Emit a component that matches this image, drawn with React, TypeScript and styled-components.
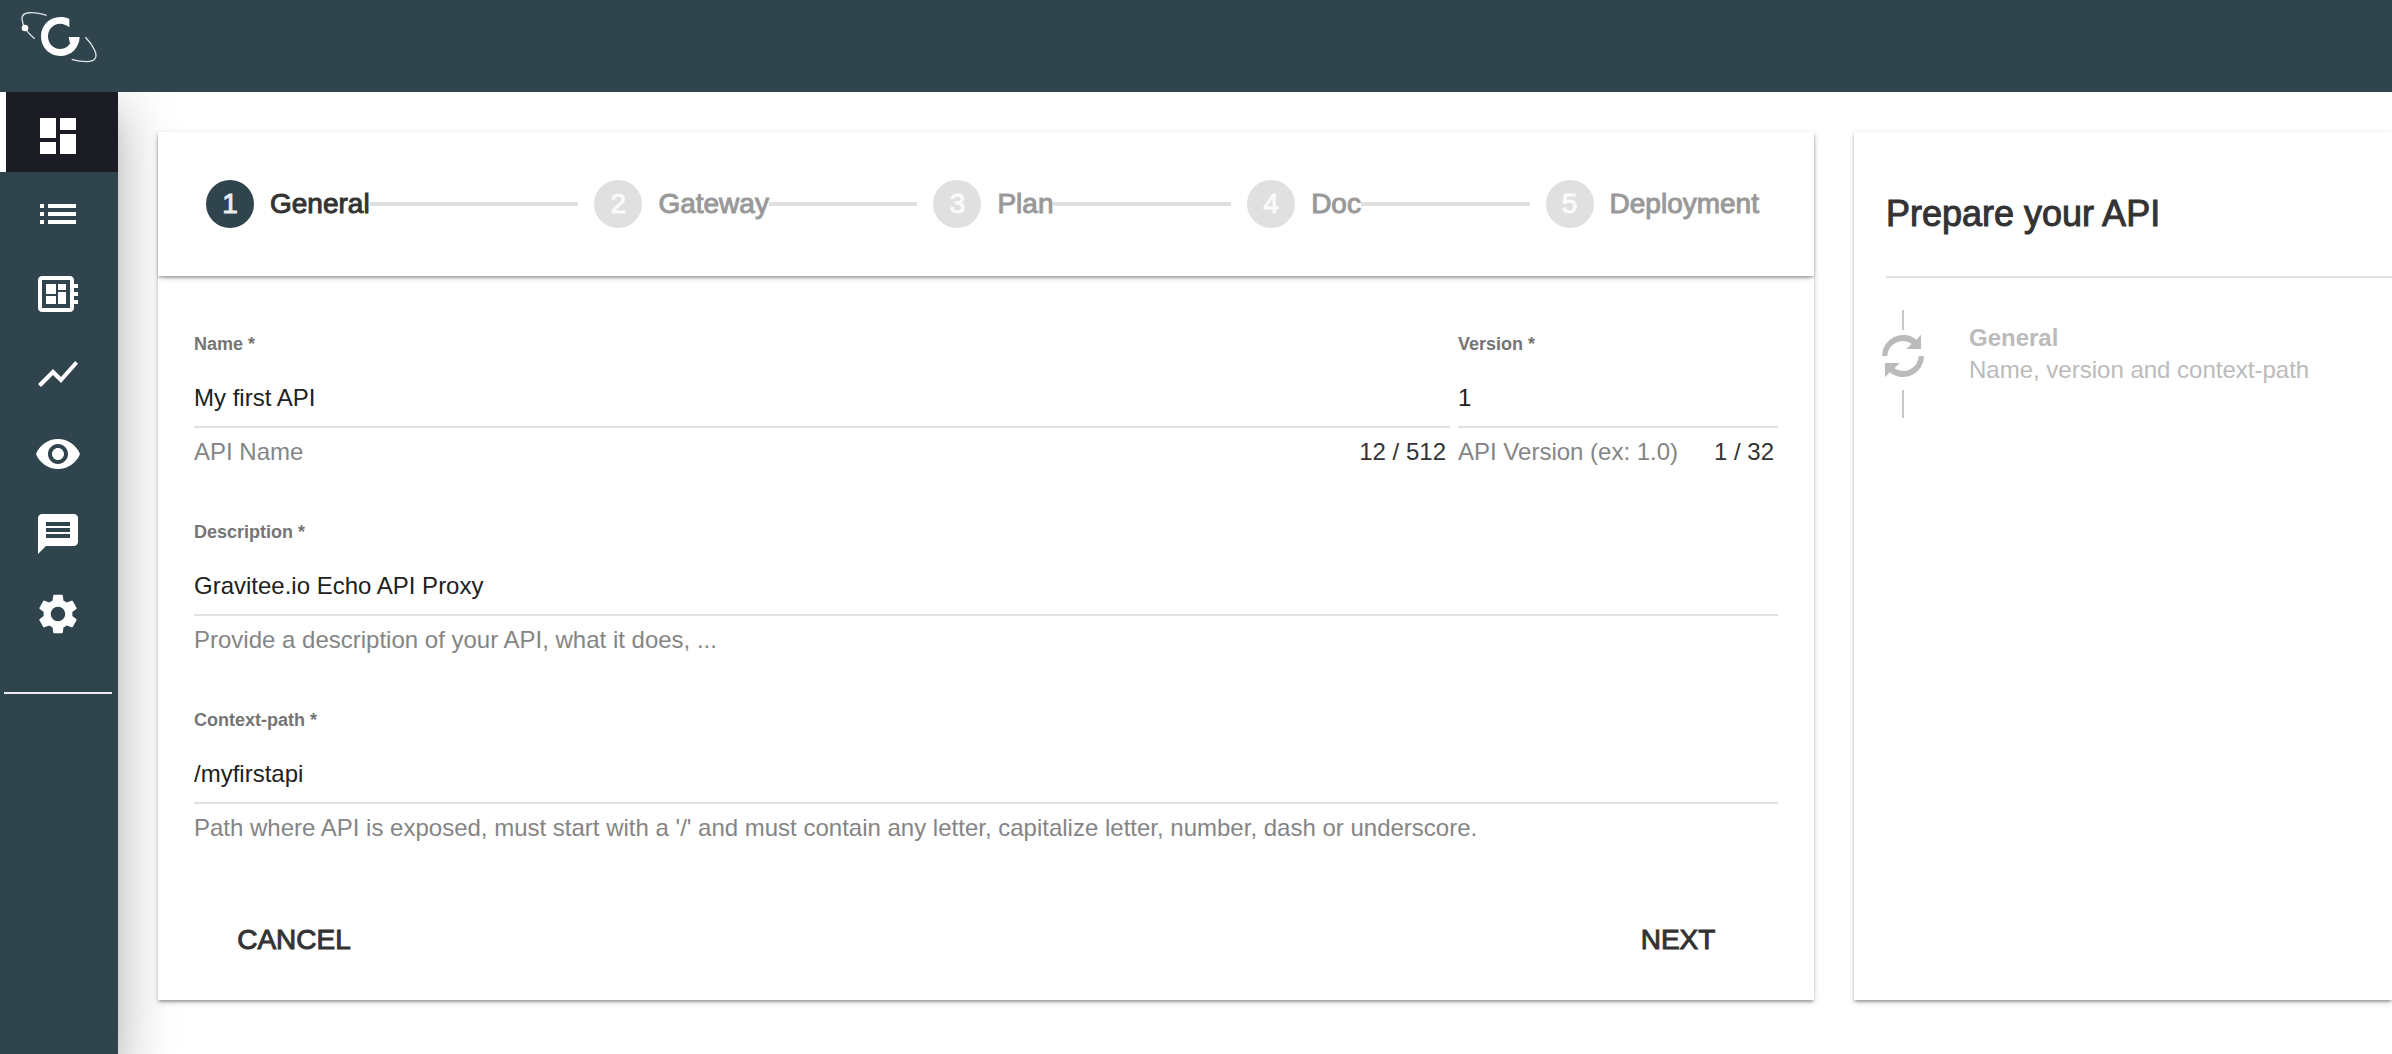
import React, { useState } from "react";
import styled, { createGlobalStyle, css } from "styled-components";
import {
  MdDashboard,
  MdList,
  MdDeveloperBoard,
  MdShowChart,
  MdVisibility,
  MdMessage,
  MdSettings,
} from "react-icons/md";

const slate = "#30444e";
const ink = "#333333";
const rule = "#e0e0e0";

const GlobalStyle = createGlobalStyle`
  *, *::before, *::after { box-sizing: border-box; }
  body {
    margin: 0;
    background: #ffffff;
    color: ${ink};
    font-family: "Liberation Sans", Arial, sans-serif;
  }
`;

const mediumWeight = css`
  font-weight: 400;
  -webkit-text-stroke: 1px currentColor;
`;

const Page = styled.div`
  min-height: 100vh;
  display: flex;
  flex-direction: column;
`;

const TopBar = styled.header`
  height: 92px;
  flex: none;
  padding: 6px 16px;
  background: ${slate};
`;

const LogoLink = styled.a`
  display: inline-block;
  svg { display: block; }
`;

const Body = styled.div`
  flex: 1;
  display: flex;
  overflow: hidden;
`;

const SideBar = styled.nav`
  flex: 0 0 118px;
  background: ${slate};
  box-shadow: 0 16px 20px -10px rgba(0, 0, 0, 0.2), 0 32px 48px 4px rgba(0, 0, 0, 0.14),
    0 12px 60px 10px rgba(0, 0, 0, 0.12);
`;

const NavLink = styled.a<{ $active?: boolean }>`
  display: block;
  height: 80px;
  padding: 16px 34px;
  color: #ffffff;
  svg { display: block; width: 48px; height: 48px; }
  ${(p) =>
    p.$active &&
    css`
      margin-bottom: 2px;
      padding: 20px 28px;
      border-left: 6px solid #ffffff;
      background: #1c1c25;
    `}
`;

const NavRule = styled.hr`
  height: 2px;
  margin: 38px 6px 0 4px;
  border: 0;
  background: #ececf0;
`;

const Content = styled.main`
  flex: 1;
  min-width: 0;
  display: flex;
  align-items: stretch;
  gap: 40px;
  padding: 40px 0 54px 40px;
`;

const shadow = css`
  box-shadow: 0 2px 6px rgba(0, 0, 0, 0.2), 0 2px 2px rgba(0, 0, 0, 0.14),
    0 4px 2px -2px rgba(0, 0, 0, 0.12);
`;

const Card = styled.section`
  flex: 1;
  min-width: 0;
  background: #ffffff;
  ${shadow}
`;

const Aside = styled.aside`
  flex: 0 0 538px;
  padding-left: 32px;
  background: #ffffff;
  ${shadow}
`;

const Steps = styled.ol`
  height: 144px;
  margin: 0;
  padding: 0 48px;
  display: flex;
  align-items: center;
  list-style: none;
  box-shadow: 0 4px 6px -3px rgba(0, 0, 0, 0.3), 0 2px 2px rgba(0, 0, 0, 0.2);
`;

const Step = styled.li<{ $grow: number }>`
  display: flex;
  align-items: center;
  flex: ${(p) => p.$grow} 0 auto;
`;

const StepButton = styled.button<{ $active: boolean }>`
  display: flex;
  align-items: center;
  gap: 16px;
  padding: 0;
  border: 0;
  background: none;
  color: ${(p) => (p.$active ? ink : "#999999")};
  font: inherit;
  font-size: 28px;
  line-height: 48px;
  ${mediumWeight}
`;

const StepNumber = styled.span<{ $active: boolean }>`
  width: 48px;
  height: 48px;
  border-radius: 50%;
  background: ${(p) => (p.$active ? slate : rule)};
  color: ${(p) => (p.$active ? "#eaeced" : "#fafafa")};
  text-align: center;
`;

const StepLine = styled.span`
  flex: 1;
  height: 4px;
  margin-right: 16px;
  background: ${rule};
`;

const Form = styled.form`
  padding: 54px 36px 0;
`;

const FieldRow = styled.div`
  display: flex;
  gap: 8px;
`;

const FieldBox = styled.div<{ $narrow?: boolean }>`
  flex: ${(p) => (p.$narrow ? "0 0 320px" : "1")};
  min-width: 0;
  height: 188px;
  display: flex;
  flex-direction: column;
`;

const Label = styled.label`
  color: #757575;
  font-size: 18px;
  font-weight: 700;
  line-height: 28px;
`;

const Input = styled.input`
  width: 100%;
  height: 60px;
  margin-top: 10px;
  padding: 2px 0 0;
  border: 0;
  border-bottom: 2px solid ${rule};
  outline: 0;
  background: none;
  color: #212121;
  font: inherit;
  font-size: 24px;
`;

const HintRow = styled.div`
  display: flex;
  justify-content: space-between;
  padding: 10px 4px 0 0;
  font-size: 24px;
  line-height: 28px;
  white-space: nowrap;
`;

const Hint = styled.span`
  color: #858585;
`;

const Actions = styled.div`
  display: flex;
  justify-content: space-between;
  padding: 10px 12px 18px;
`;

const ActionButton = styled.button`
  min-width: 176px;
  height: 72px;
  border: 0;
  background: none;
  color: ${ink};
  font: inherit;
  font-size: 28px;
  text-transform: uppercase;
  ${mediumWeight}
`;

const AsideTitle = styled.h2`
  margin: 0;
  padding-top: 60px;
  height: 146px;
  border-bottom: 2px solid ${rule};
  font-size: 36px;
  line-height: 44px;
  ${mediumWeight}
`;

const Progress = styled.div`
  display: flex;
  gap: 44px;
  padding-top: 32px;
  color: #bbbbbb;
`;

const Track = styled.div`
  display: flex;
  flex-direction: column;
  align-items: center;
  margin-left: -5px;
  svg { display: block; margin: 3px 0 11px; }
`;

const TrackLine = styled.span<{ $length: number }>`
  width: 2px;
  height: ${(p) => p.$length}px;
  background: #c8c8c8;
`;

const ProgressText = styled.div`
  padding-top: 12px;
  font-size: 24px;
  line-height: 32px;
`;

const ProgressTitle = styled.h3`
  margin: 0;
  font-size: inherit;
  font-weight: 700;
`;

const ProgressNote = styled.p`
  margin: 0;
`;

const Logo = () => (
  <svg width="90" height="64" viewBox="0 0 270 192" fill="none" role="img" aria-label="Gravitee.io">
    <path
      d="M160 39V64C151 57 142 53 133 53C111 53 96 70 96 91C96 112 111 129 133 129C147 129 157 122 162 112L158 93H191C190 126 165 150 133 150C100 150 75 124 75 91C75 58 100 33 133 33C143 33 152 35 160 39Z"
      fill="#fff"
    />
    <path d="M92 28C50 15 17 17 18 38C19 62 35 81 56 98" stroke="#dfe4e6" strokeWidth="4" />
    <path d="M208 94C233 119 246 147 237 158C229 169 203 169 167 160" stroke="#dfe4e6" strokeWidth="4" />
    <circle cx="27" cy="66" r="10" fill="#fff" />
  </svg>
);

const SyncIcon = () => (
  <svg width="44" height="46" viewBox="-66 -69 132 138" fill="currentColor" aria-hidden="true">
    <path d="M-63 0A63 63 0 0 1 40 -49L54 -64V-21H10L26 -37A47 47 0 0 0 -47 0Z" />
    <path d="M-63 0A63 63 0 0 1 40 -49L54 -64V-21H10L26 -37A47 47 0 0 0 -47 0Z" transform="rotate(180)" />
  </svg>
);

const navItems = [
  { label: "Dashboard", Icon: MdDashboard },
  { label: "APIs", Icon: MdList },
  { label: "Applications", Icon: MdDeveloperBoard },
  { label: "Analytics", Icon: MdShowChart },
  { label: "Audit", Icon: MdVisibility },
  { label: "Messages", Icon: MdMessage },
  { label: "Settings", Icon: MdSettings },
];

const steps = [
  { label: "General", grow: 208 },
  { label: "Gateway", grow: 148 },
  { label: "Plan", grow: 177 },
  { label: "Doc", grow: 168 },
  { label: "Deployment", grow: 7 },
];

type FieldProps = {
  id: string;
  label: string;
  hint: string;
  initial: string;
  max?: number;
  narrow?: boolean;
};

const Field = ({ id, label, hint, initial, max, narrow }: FieldProps) => {
  const [value, setValue] = useState(initial);
  return (
    <FieldBox $narrow={narrow}>
      <Label htmlFor={id}>{label} *</Label>
      <Input id={id} value={value} maxLength={max} onChange={(e) => setValue(e.target.value)} />
      <HintRow>
        <Hint>{hint}</Hint>
        {max && (
          <span>
            {value.length} / {max}
          </span>
        )}
      </HintRow>
    </FieldBox>
  );
};

export default function App() {
  return (
    <Page>
      <GlobalStyle />
      <TopBar>
        <LogoLink href="#">
          <Logo />
        </LogoLink>
      </TopBar>
      <Body>
        <SideBar>
          {navItems.map(({ label, Icon }, i) => (
            <NavLink key={label} href="#" aria-label={label} $active={i === 0}>
              <Icon />
            </NavLink>
          ))}
          <NavRule />
        </SideBar>
        <Content>
          <Card>
            <Steps>
              {steps.map(({ label, grow }, i) => (
                <Step key={label} $grow={grow}>
                  <StepButton type="button" $active={i === 0}>
                    <StepNumber $active={i === 0}>{i + 1}</StepNumber>
                    {label}
                  </StepButton>
                  {i < steps.length - 1 && <StepLine />}
                </Step>
              ))}
            </Steps>
            <Form onSubmit={(e) => e.preventDefault()}>
              <FieldRow>
                <Field id="name" label="Name" hint="API Name" initial="My first API" max={512} />
                <Field id="version" label="Version" hint="API Version (ex: 1.0)" initial="1" max={32} narrow />
              </FieldRow>
              <Field
                id="description"
                label="Description"
                hint="Provide a description of your API, what it does, ..."
                initial="Gravitee.io Echo API Proxy"
              />
              <Field
                id="path"
                label="Context-path"
                hint="Path where API is exposed, must start with a '/' and must contain any letter, capitalize letter, number, dash or underscore."
                initial="/myfirstapi"
              />
              <Actions>
                <ActionButton type="button">Cancel</ActionButton>
                <ActionButton type="submit">Next</ActionButton>
              </Actions>
            </Form>
          </Card>
          <Aside>
            <AsideTitle>Prepare your API</AsideTitle>
            <Progress>
              <Track>
                <TrackLine $length={20} />
                <SyncIcon />
                <TrackLine $length={28} />
              </Track>
              <ProgressText>
                <ProgressTitle>General</ProgressTitle>
                <ProgressNote>Name, version and context-path</ProgressNote>
              </ProgressText>
            </Progress>
          </Aside>
        </Content>
      </Body>
    </Page>
  );
}
